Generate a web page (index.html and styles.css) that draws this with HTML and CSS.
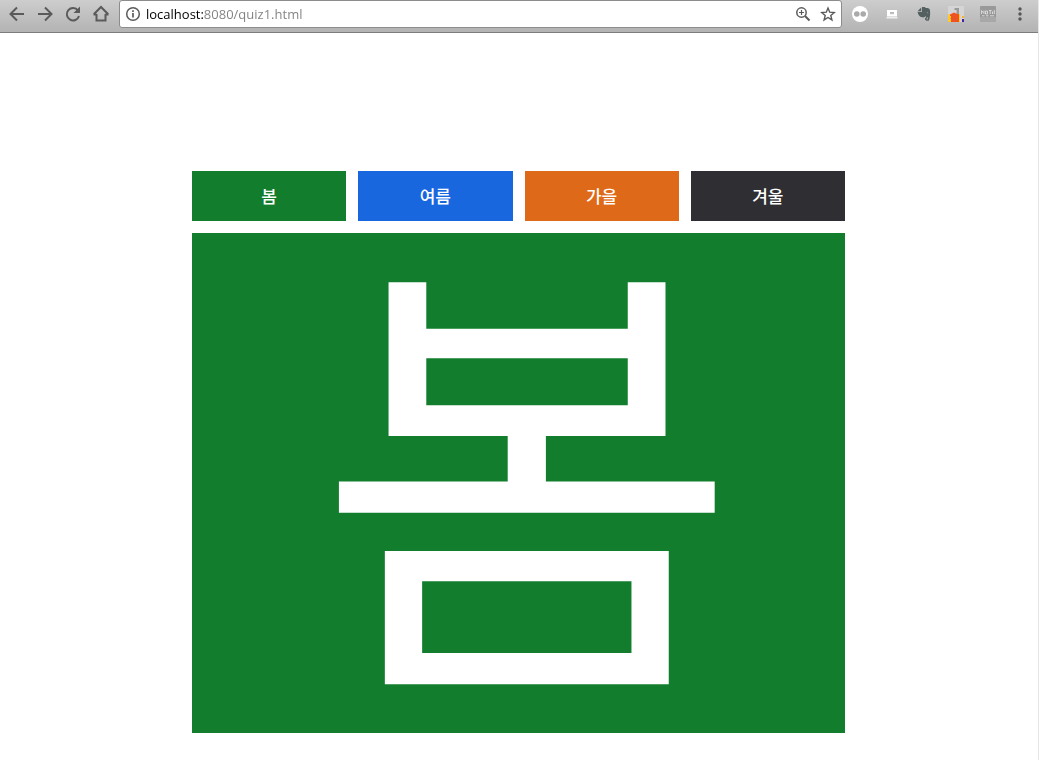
FILE: index.html
```html
<!DOCTYPE html>
<html lang="ko">
<head>
<meta charset="utf-8">
<title>quiz1</title>
<link rel="stylesheet" href="styles.css">
</head>
<body>
<header class="toolbar">
  <nav class="nav-buttons" aria-label="Navigation">
    <button class="icon-button" aria-label="Back"><svg width="18" height="18" viewBox="0 0 18 18" fill="none" stroke="#5a5a5a" stroke-width="2"><path d="M16 9H3M9 2.5L2.5 9L9 15.500"/></svg></button>
    <button class="icon-button" aria-label="Forward"><svg width="18" height="18" viewBox="0 0 18 18" fill="none" stroke="#5a5a5a" stroke-width="2"><path d="M2 9h13M9 2.500L15.500 9L9 15.500"/></svg></button>
    <button class="icon-button" aria-label="Reload"><svg width="18" height="18" viewBox="0 0 18 18"><path d="M14 5.500A6.200 6.200 0 1 0 15 11" fill="none" stroke="#5a5a5a" stroke-width="2"/><path d="M16 1.500V8H9.500Z" fill="#5a5a5a"/></svg></button>
    <button class="icon-button" aria-label="Home"><svg width="18" height="18" viewBox="0 0 18 18" fill="none" stroke="#5a5a5a" stroke-width="2"><path d="M4.500 9v6.500h9V9M1.500 9.500H4.500M13.500 9.500H16.500M1.800 9.300L9 2l7.200 7.300"/></svg></button>
  </nav>
  <form class="address-bar">
    <svg width="16" height="16" viewBox="0 0 16 16"><circle cx="8" cy="8" r="6.300" fill="none" stroke="#5a5a5a" stroke-width="1.500"/><path d="M8 7v4.500M8 4.300v1.700" stroke="#5a5a5a" stroke-width="1.700"/></svg>
    <input class="url" type="text" aria-label="Address" value="localhost:8080/quiz1.html">
    <button class="star-button" type="button" aria-label="Zoom"><svg width="16" height="16" viewBox="0 0 16 16" fill="none" stroke="#5a5a5a"><circle cx="6.500" cy="6.500" r="4.700" stroke-width="1.500"/><path d="M10 10l4.500 4.500" stroke-width="2"/><path d="M4 6.500h5M6.500 4v5" stroke-width="1.200"/></svg></button>
    <button class="star-button" type="button" aria-label="Bookmark"><svg width="16" height="16" viewBox="0 0 16 16" fill="none" stroke="#5a5a5a" stroke-width="1.400"><path d="M8 2l1.700 4.200 4.600.3-3.500 3 1.100 4.400L8 11.500l-3.900 2.400 1.100-4.400-3.500-3 4.600-.3Z"/></svg></button>
  </form>
  <div class="extensions">
    <button class="icon-button" aria-label="Dots extension"><svg width="18" height="18" viewBox="0 0 18 18"><circle cx="9" cy="9" r="8" fill="#fff"/><circle cx="5.800" cy="9" r="2.800" fill="#aaa"/><circle cx="12.200" cy="9" r="2.800" fill="#aaa"/></svg></button>
    <button class="icon-button" aria-label="Screen extension"><svg width="18" height="18" viewBox="0 0 18 18"><path d="M4 5h10v6.500H4Z" fill="#fff"/><path d="M3.500 12h11v1.500h-11Z" fill="#eee"/><path d="M7 7h4v2.200H7Z" fill="#aaa"/><path d="M8 7.500v1.500M10 7.500v1.500" stroke="#ddd"/></svg></button>
    <button class="icon-button" aria-label="Notes extension"><svg width="18" height="18" viewBox="0 0 18 18"><path d="M6.200 2.500L2.500 6.200h3.700Z" fill="#53605f"/><path d="M7 2.300c2-.6 3.300-.1 3.700.7 1.900 0 3.600.3 4.100 1.600.7 3 .4 7-.7 10.300-.6 1.500-3.900 1.200-4.200-.8 0-1.500 1-2 2.500-1.900v1.400c-1.300-.1-1.200.6-.6.9.8.3 1.200-.8 1.200-2.300-1.400.1-2.200-.4-2.500-1.200-.5 1.400-2 1.500-3.500 1.300C4.500 12 3 10 2.700 7.100h4.200Z" fill="#53605f"/><path d="M11.700 8.100c.3-1 1.500-.8 1.700.2Z" fill="#ccc"/></svg></button>
    <button class="icon-button" aria-label="Excavator extension"><svg width="18" height="18" viewBox="0 0 18 18"><path d="M1 1h16v16H1Z" fill="#d5d5d5"/><path d="M7.500 3h4.500v8h-2.500V5h-2Z" fill="#999"/><path d="M3 9.500l2-1 2-1 2 1 3 1v7.500H3Z" fill="#f4511e"/><path d="M1 9h1.500v2H4v6H1Z" fill="#ffc928"/><path d="M12 9h1v8h-1Z" fill="#ffc928"/><path d="M15 11h2v2h-2Z" fill="#f6b431"/><path d="M15 14h2v3h-2Z" fill="#4023a0"/><path d="M3 13.500h9M6 9v8M9 9v8" stroke="#d85b36" stroke-width=".6"/></svg></button>
    <button class="icon-button" aria-label="Dictionary extension"><svg width="18" height="18" viewBox="0 0 18 18"><rect x="1" y="1" width="16" height="16" rx="1" fill="#999"/><path d="M1 12h16v5H1Z" fill="#a8a8a8"/><path d="M2.500 9V5.500L5 8.500V5.500M6.500 6v3h2V6h-2M10 5.500h2.500M11.200 5.500V9M13.500 6.500V9M15.300 5v4M3 10.800h2.500M7 10.800h2.500M11 10.800h4" fill="none" stroke="#d8d8d8" stroke-width="1"/></svg></button>
    <button class="icon-button" aria-label="Menu"><svg width="18" height="18" viewBox="0 0 18 18" fill="#555"><circle cx="9" cy="4" r="1.700"/><circle cx="9" cy="9" r="1.700"/><circle cx="9" cy="14" r="1.700"/></svg></button>
  </div>
</header>
<main class="viewport">
  <section class="seasons">
    <nav class="tabs" aria-label="계절">
      <button class="tab spring">봄</button>
      <button class="tab summer">여름</button>
      <button class="tab autumn">가을</button>
      <button class="tab winter">겨울</button>
    </nav>
    <div class="panel spring">봄</div>
  </section>
</main>
</body>
</html>
```
FILE: styles.css
```css
* { box-sizing: border-box; }
body {
  margin: 0;
  min-height: 100vh;
  display: flex;
  flex-direction: column;
  background: #fff;
  border-right: 1px solid #e6e6e6;
  font-family: "Open Sans", "Noto Sans CJK KR", sans-serif;
}
button { padding: 0; border: 0; background: none; font: inherit; color: inherit; cursor: pointer; }
svg { display: block; }
.toolbar {
  display: flex;
  align-items: flex-start;
  height: 33px;
  padding: 0 9px 0 8px;
  background: linear-gradient(#cdcdcd, #b3b3b3);
  border-bottom: 1px solid #7c7c7c;
}
.nav-buttons { display: flex; gap: 10px; padding: 5px 9px 0 0; }
.address-bar {
  flex: 1;
  display: flex;
  align-items: center;
  gap: 5px;
  height: 28px;
  padding: 0 5px;
  background: #fff;
  border: 1px solid #8c8c8c;
  border-radius: 3px;
}
.url {
  flex: 1;
  min-width: 0;
  height: 24px;
  padding: 0;
  border: 0;
  outline: 0;
  font: 13px/24px "Open Sans", sans-serif;
  color: transparent;
  background: linear-gradient(to right, #000 58px, #808080 58px);
  -webkit-background-clip: text;
  background-clip: text;
}
.star-button { margin-left: 4px; }
.extensions { display: flex; gap: 14px; padding: 5px 0 0 9px; }
.viewport { flex: 1; padding: 138px 17px 27px 16px; overflow: hidden; }
.seasons { max-width: 653px; margin: 0 auto; }
.tabs { display: grid; grid-template-columns: repeat(4, 1fr); gap: 12px; margin-bottom: 12px; }
.tab {
  height: 50px;
  color: #fff;
  font: 500 17px/20px "Noto Sans CJK KR", sans-serif;
}
.panel {
  height: 500px;
  padding-left: 18px;
  color: #fff;
  font: 400 460px/440px "Noto Sans CJK KR", sans-serif;
  text-align: center;
}
.spring { background: #127e2d; }
.summer { background: #1967df; }
.autumn { background: #de6918; }
.winter { background: #2f2e33; }
```
